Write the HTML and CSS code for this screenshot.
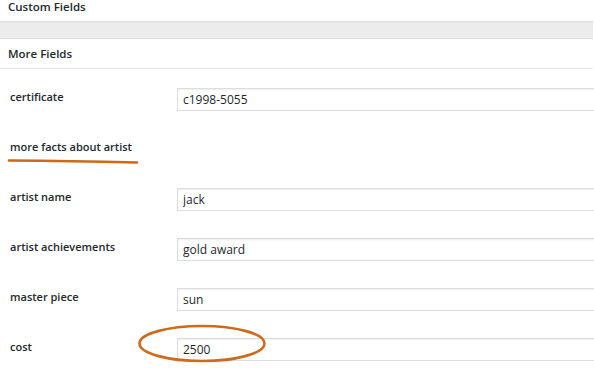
FILE: index.html
```html
<!DOCTYPE html>
<html lang="en">
<head>
    <meta charset="UTF-8">
    <meta name="viewport" content="width=device-width, initial-scale=1.0">
    <title>Custom Fields</title>
    <link rel="stylesheet" href="styles.css">
</head>
<body>
    <div class="panel">
        <div class="panel-title">Custom Fields</div>
        <div class="panel-gap"></div>
        <div class="group-title">More Fields</div>

        <div class="fields">
            <div class="field">
                <label for="certificate">certificate</label>
                <input id="certificate" type="text" value="c1998-5055">
            </div>
            <div class="field">
                <label class="heading">more facts about artist</label>
            </div>
            <div class="field">
                <label for="artist-name">artist name</label>
                <input id="artist-name" type="text" value="jack">
            </div>
            <div class="field">
                <label for="achievements">artist achievements</label>
                <input id="achievements" type="text" value="gold award">
            </div>
            <div class="field">
                <label for="masterpiece">master piece</label>
                <input id="masterpiece" type="text" value="sun">
            </div>
            <div class="field">
                <label for="cost">cost</label>
                <input id="cost" type="text" value="2500">
            </div>
        </div>
    </div>

    <!-- hand drawn marks on top of the screenshot -->
    <svg class="marks" width="594" height="369" viewBox="0 0 594 369">
        <path d="M9 160.5 Q70 161 137 162.5" fill="none" stroke="#cf6818" stroke-width="2.6" stroke-linecap="round"/>
        <ellipse cx="202" cy="343.5" rx="62.5" ry="17.5" fill="none" stroke="#cf6a1c" stroke-width="2.6"/>
    </svg>
</body>
</html>
```

FILE: styles.css
```css
body {
    margin: 0;
    padding: 0;
    overflow: hidden;
    font-family: 'Open Sans', 'Liberation Sans', sans-serif;
    font-size: 11px;
    color: #23282d;
    background: #ffffff;
}

.panel {
    width: 594px;
}

.panel-title {
    height: 21px;
    line-height: 14px;
    padding: 0 8px;
    font-size: 11.5px;
    font-weight: 600;
}

.panel-gap {
    height: 15px;
    margin-right: 1px;
    background: #ececec;
    border-top: 2px solid #e0e0e0;
    border-bottom: 1px solid #dcdcdc;
}

.group-title {
    height: 29px;
    line-height: 29px;
    margin-right: 1px;
    padding: 0 8px;
    font-size: 11.5px;
    font-weight: 600;
    border-bottom: 1px solid #e5e5e5;
}

.fields {
    padding-top: 6px;
}

.field {
    display: flex;
    align-items: flex-start;
    height: 24px;
    padding: 13px 0 13px 10px;
    overflow: hidden;
}

.field label {
    flex-shrink: 0;
    width: 167px;
    line-height: 18px;
    font-weight: 600;
}

.field input {
    flex: 1 0 auto;
    min-width: 0;
    height: 23px;
    box-sizing: border-box;
    margin: 0 -4px 0 0;
    padding: 0 5px;
    border: 1px solid #dddddd;
    box-shadow: inset 0 1px 2px rgba(0, 0, 0, 0.07);
    font-family: inherit;
    font-size: 12px;
    color: #23282d;
    background: #ffffff;
}

.marks {
    position: absolute;
    top: 0;
    left: 0;
    pointer-events: none;
}
```
